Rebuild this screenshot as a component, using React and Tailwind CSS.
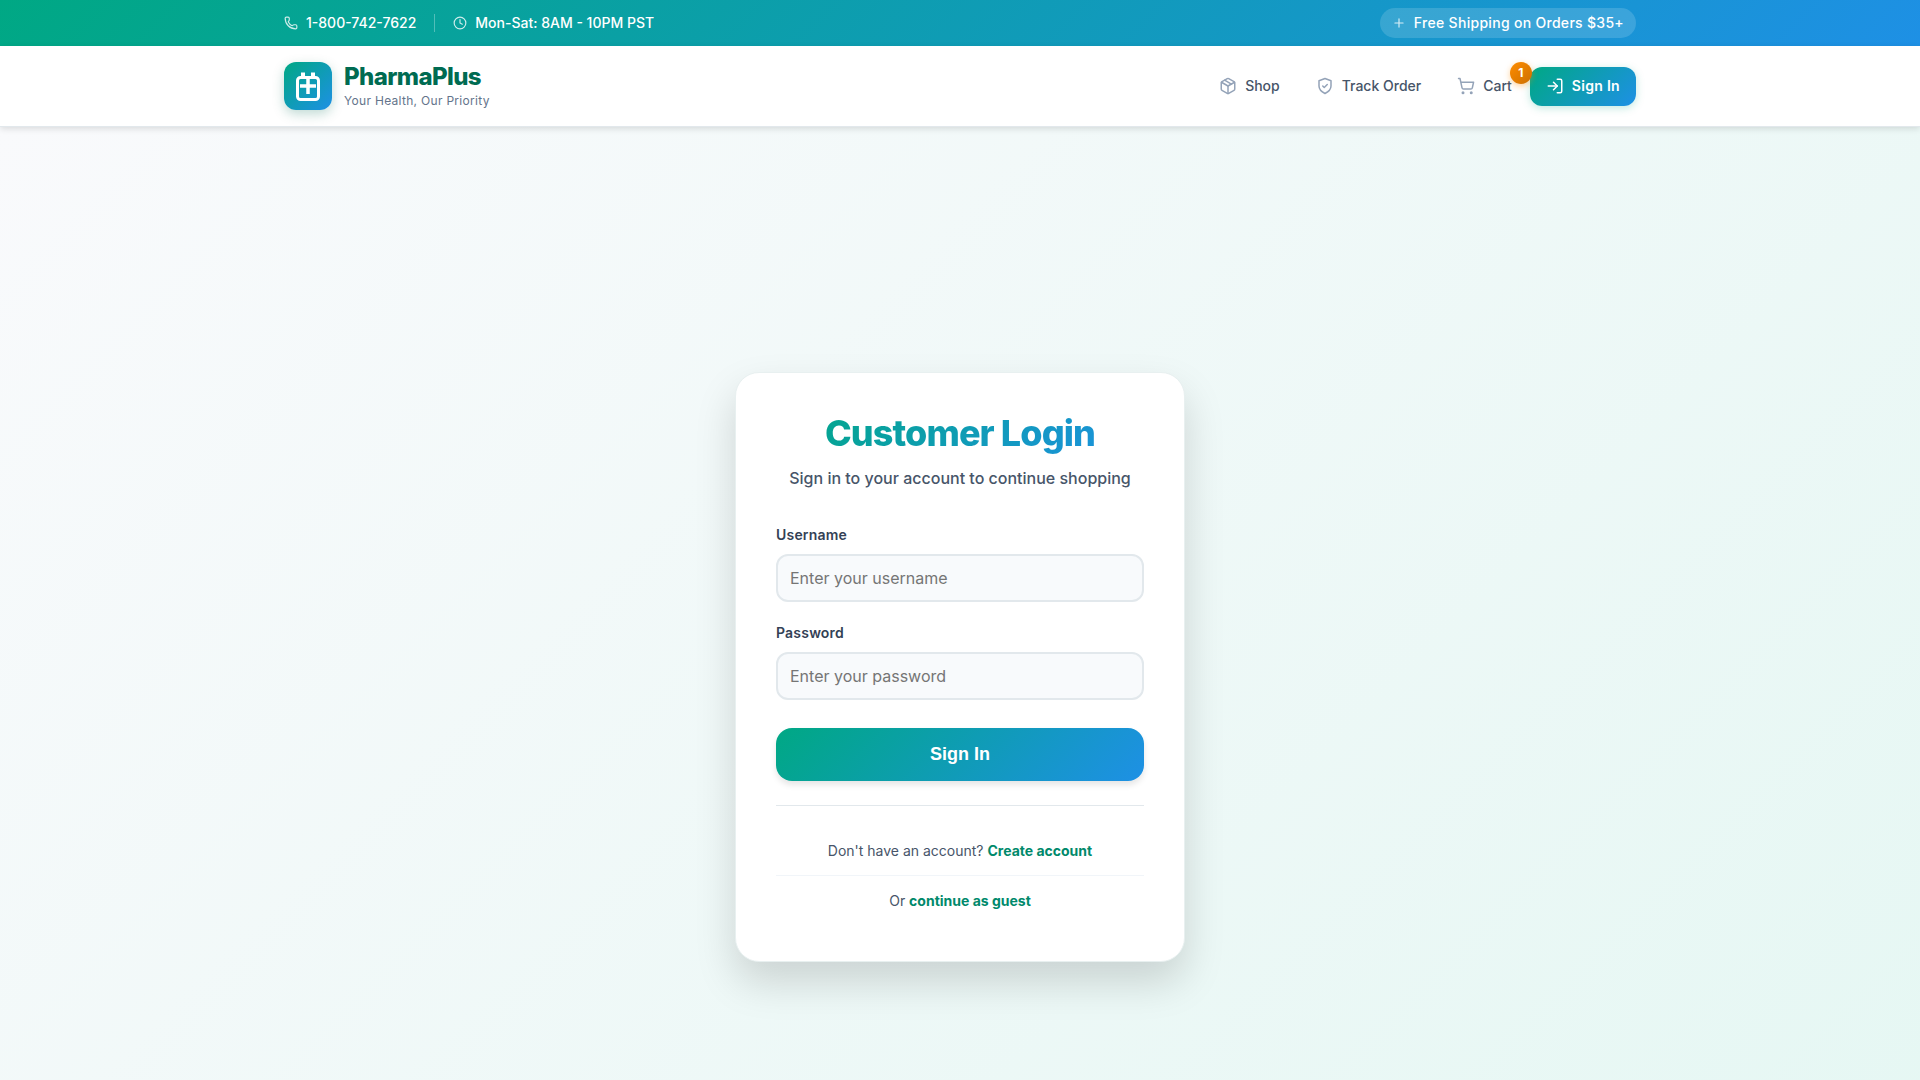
import React, { useState } from "react";
import { Phone, Clock, Plus, Package, ShoppingCart } from "lucide-react";

const navLinks = [
  { label: "Shop", href: "#shop", icon: Package },
  { label: "Track Order", href: "#track", icon: ShieldIcon },
];

function ShieldIcon({ className }) {
  return (
    <svg className={className} viewBox="0 0 24 24" fill="none" stroke="currentColor" strokeWidth="2" strokeLinecap="round" strokeLinejoin="round" aria-hidden="true">
      <path d="M12 22s8-4 8-10V5l-8-3-8 3v7c0 6 8 10 8 10z" />
      <path d="m9 12 2 2 4-4" />
    </svg>
  );
}

function SignInIcon({ className }) {
  return (
    <svg className={className} viewBox="0 0 24 24" fill="none" stroke="currentColor" strokeWidth="2" strokeLinecap="round" strokeLinejoin="round" aria-hidden="true">
      <path d="M15 3h4a2 2 0 0 1 2 2v14a2 2 0 0 1-2 2h-4" />
      <path d="m10 17 5-5-5-5" />
      <path d="M15 12H3" />
    </svg>
  );
}

function LogoIcon() {
  return (
    <svg className="w-8 h-8" viewBox="0 0 32 32" fill="none" stroke="white" strokeWidth="3" aria-hidden="true">
      <rect x="5.5" y="7.5" width="21" height="22" rx="3" />
      <path d="M11 2.5v5M21 2.5v5" strokeWidth="4" />
      <path d="M16 9v15M8 16h16" strokeWidth="3.5" />
    </svg>
  );
}

function TopBar() {
  return (
    <div className="bg-linear-135/srgb from-[#00a884] to-[#1e90e5] text-white text-sm font-medium">
      <div className="max-w-[1400px] mx-auto px-6 py-2 flex items-center justify-between">
        <div className="flex items-center">
          <a href="tel:18007427622" className="flex items-center gap-2">
            <Phone className="w-3.5 h-3.5 opacity-80" />
            1-800-742-7622
          </a>
          <span className="w-px h-[18px] mx-[18px] bg-white/30" />
          <span className="flex items-center gap-2">
            <Clock className="w-3.5 h-3.5 opacity-80" />
            Mon-Sat: 8AM - 10PM PST
          </span>
        </div>
        <span className="flex items-center gap-2 h-[30px] px-3 rounded-full bg-white/15 tracking-[0.3px]">
          <Plus className="w-3.5 h-3.5 opacity-80" />
          Free Shipping on Orders $35+
        </span>
      </div>
    </div>
  );
}

function Header() {
  return (
    <header className="relative bg-white border-b border-[#e2e8ec] shadow-[0_2px_6px_rgba(0,0,0,0.12)]">
      <div className="max-w-[1400px] h-20 mx-auto px-6 flex items-center justify-between">
        <a href="#home" className="flex items-center gap-3">
          <span className="w-12 h-12 rounded-xl flex items-center justify-center bg-linear-135/srgb from-[#00a884] to-[#1e90e5] shadow-[0_4px_12px_rgba(0,107,82,0.25)]">
            <LogoIcon />
          </span>
          <span className="flex flex-col">
            <span className="text-2xl leading-[30px] font-extrabold tracking-tight text-[#006b52]">PharmaPlus</span>
            <span className="text-xs leading-[18px] tracking-[0.3px] text-[#64748b]">Your Health, Our Priority</span>
          </span>
        </a>
        <nav className="flex items-center text-sm font-medium text-[#475569]">
          {navLinks.map(({ label, href, icon: Icon }) => (
            <a key={label} href={href} className="flex items-center gap-2 px-[18px] py-2">
              <Icon className="w-[18px] h-[18px] text-[#94a3b8]" />
              {label}
            </a>
          ))}
          <a href="#cart" className="relative flex items-center gap-2 pl-[18px] pr-[18px] py-2">
            <ShoppingCart className="w-[18px] h-[18px] text-[#94a3b8]" />
            Cart
            <span className="absolute -top-1.5 -right-0.5 w-[22px] h-[22px] rounded-full flex items-center justify-center bg-linear-135/srgb from-[#ff8c00] to-[#cc7000] text-xs font-bold text-white shadow-[0_2px_6px_rgba(255,140,0,0.4)]">
              1
            </span>
          </a>
          <a href="#login" className="flex items-center gap-2 h-[39px] px-4 rounded-xl bg-linear-135/srgb from-[#00a884] to-[#1e90e5] font-semibold tracking-[0.3px] text-white shadow-[0_2px_8px_rgba(0,168,132,0.25)]">
            <SignInIcon className="w-[18px] h-[18px]" />
            Sign In
          </a>
        </nav>
      </div>
    </header>
  );
}

function Field({ id, label, type, placeholder, value, onChange }) {
  return (
    <div className="mb-5">
      <label htmlFor={id} className="block mb-2 text-sm leading-[22px] font-semibold tracking-[0.2px] text-[#334155]">
        {label}
      </label>
      <input
        id={id}
        type={type}
        placeholder={placeholder}
        value={value}
        onChange={(e) => onChange(e.target.value)}
        className="block w-full h-12 px-3 rounded-xl border-2 border-[#e2e8ec] bg-[#f8fafc] text-base text-[#334155] placeholder:text-[#757575] outline-none focus:border-[#00a884]"
      />
    </div>
  );
}

export default function App() {
  const [username, setUsername] = useState("");
  const [password, setPassword] = useState("");

  return (
    <div className="font-['Inter',sans-serif]">
      <TopBar />
      <Header />
      <main className="min-h-screen flex items-center justify-center p-6 bg-linear-135/srgb from-[#f9fafc] to-[#e5f7f3]">
        <section className="w-full max-w-[450px] p-10 rounded-3xl border border-[#e8f0f0] bg-white shadow-[0_20px_40px_rgba(0,0,0,0.15)]">
          <div className="mb-8 text-center">
            <h1 className="mb-1 pb-2 text-4xl leading-10 font-extrabold tracking-tight bg-linear-135/srgb from-[#00a884] to-[#1e90e5] bg-clip-text text-transparent">
              Customer Login
            </h1>
            <p className="text-base leading-[27px] font-medium text-[#475569]">Sign in to your account to continue shopping</p>
          </div>
          <form onSubmit={(e) => e.preventDefault()}>
            <Field id="username" label="Username" type="text" placeholder="Enter your username" value={username} onChange={setUsername} />
            <Field id="password" label="Password" type="password" placeholder="Enter your password" value={password} onChange={setPassword} />
            <button type="submit" className="w-full h-[53px] mt-2 pb-0.5 rounded-2xl bg-linear-135/srgb from-[#00a884] to-[#1e90e5] font-['Liberation_Sans',sans-serif] text-lg font-bold text-white shadow-[0_4px_6px_rgba(0,0,0,0.1)]">
              Sign In
            </button>
          </form>
          <div className="mt-6 pt-6 border-t border-[#e2e8ec] text-center text-sm leading-[25px] text-[#475569]">
            <p className="pt-2 pb-3 border-b border-[#f1f5f9]">
              Don't have an account? <a href="#register" className="font-bold text-[#00896b]">Create account</a>
            </p>
            <p className="pt-3 pb-2">
              Or <a href="#guest" className="font-bold text-[#00896b]">continue as guest</a>
            </p>
          </div>
        </section>
      </main>
    </div>
  );
}
